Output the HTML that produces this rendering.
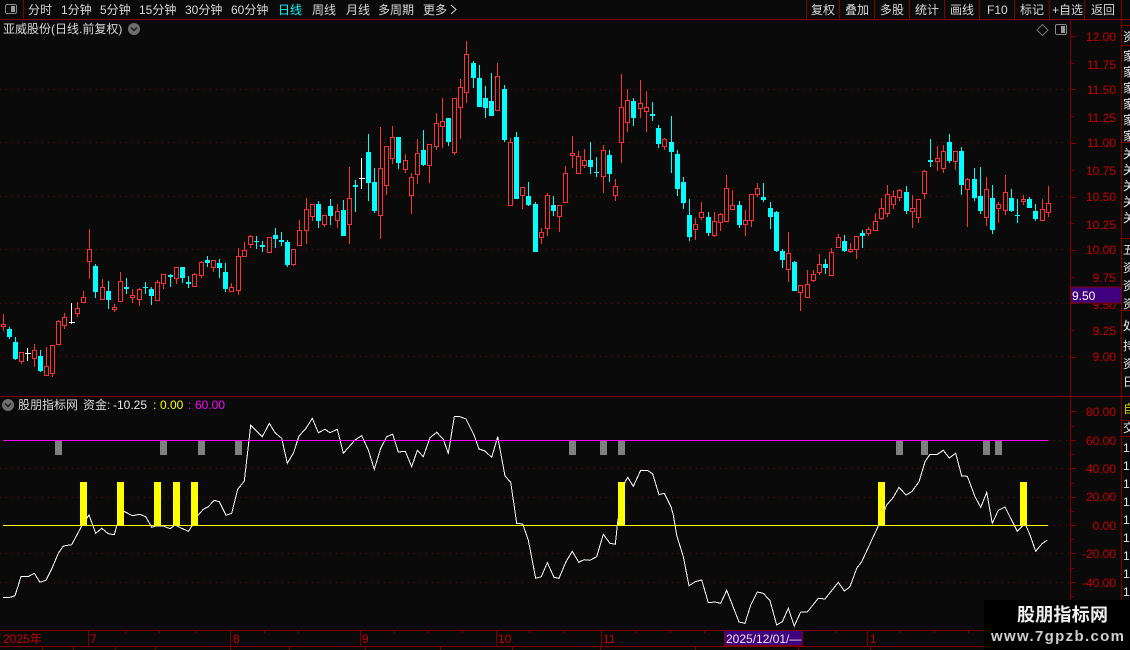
<!DOCTYPE html>
<html lang="zh">
<head>
<meta charset="utf-8">
<title>股朋指标网</title>
<style>
html,body{margin:0;padding:0;background:#0a0a0a;width:1130px;height:650px;overflow:hidden}
svg{display:block}
text{font-family:"Liberation Sans","WenQuanYi Zen Hei","Noto Sans CJK SC",sans-serif;font-size:12px;text-rendering:optimizeSpeed}
.t{fill:#d8d8d8}
.a{fill:#c80000}
.g{stroke:#7a0000;stroke-width:1;stroke-dasharray:1 5;fill:none}
.l{stroke:#800000;stroke-width:1;fill:none}
.s{fill:#e8e8e8;font-family:"WenQuanYi Zen Hei","Noto Sans CJK SC",sans-serif}
</style>
</head>
<body>
<svg width="1130" height="650" viewBox="0 0 1130 650" xmlns="http://www.w3.org/2000/svg" shape-rendering="crispEdges">
<rect width="1130" height="650" fill="#0a0a0a"/>

<!-- toolbar -->
<path class="l" d="M0 19.5H1130M23.5 0V19M806.5 0V19M839.5 0V19M874.5 0V19M909.5 0V19M944.5 0V19M979.5 0V19M1014.5 0V19M1049.5 0V19M1084.5 0V19M1121.5 0V19"/>
<rect x="5.500" y="4.500" width="11" height="9" rx="1.500" fill="none" stroke="#888" stroke-width="1"/>
<rect x="11" y="6" width="4" height="6" fill="#999"/>
<g class="t">
<text x="28" y="14" class="t">分时</text>
<text x="61" y="14" class="t">1分钟</text>
<text x="100" y="14" class="t">5分钟</text>
<text x="139" y="14" class="t">15分钟</text>
<text x="185" y="14" class="t">30分钟</text>
<text x="231" y="14" class="t">60分钟</text>
<text x="278" y="14" fill="#00ffff">日线</text>
<text x="312" y="14" class="t">周线</text>
<text x="346" y="14" class="t">月线</text>
<text x="378" y="14" class="t">多周期</text>
<text x="423" y="14" class="t">更多</text>
<text x="811" y="14" class="t">复权</text>
<text x="845" y="14" class="t">叠加</text>
<text x="880" y="14" class="t">多股</text>
<text x="915" y="14" class="t">统计</text>
<text x="950" y="14" class="t">画线</text>
<text x="987" y="14" class="t">F10</text>
<text x="1020" y="14" class="t">标记</text>
<text x="1052" y="14" class="t">+自选</text>
<text x="1091" y="14" class="t">返回</text>
</g>
<path d="M451 5L456 9.500L451 14" fill="none" stroke="#d8d8d8" stroke-width="1" shape-rendering="auto"/>

<!-- main header -->
<text x="3" y="33" class="t">亚威股份(日线.前复权)</text>
<circle cx="134" cy="29" r="6" fill="#6e6e6e" shape-rendering="auto"/>
<path d="M131 27.500L134 30.500L137 27.500" fill="none" stroke="#1a1a1a" stroke-width="1.500" shape-rendering="auto"/>
<path d="M1042.500 24.500L1048 30L1042.500 35.500L1037 30Z" fill="none" stroke="#777" stroke-width="1" shape-rendering="auto"/>
<rect x="1055.500" y="24.500" width="11" height="10" rx="1.500" fill="none" stroke="#888" stroke-width="1"/>
<rect x="1061" y="26" width="4" height="7" fill="#999"/>

<!-- grid top -->
<path class="g" d="M0 89.500H1071M0 142.500H1071M0 196.500H1071M0 249.500H1071M0 303.500H1071M0 356.500H1071"/>

<!-- red wicks -->
<path fill="none" stroke="#ff3232" stroke-width="1" d="M3.500 314V331M21.500 352V364M34.500 344V367M46.500 347V375M52.500 345V377M58.500 320V344M64.500 313V329M77.500 302V317M83.500 291V302M89.500 229V279M102.500 279V299M114.500 304V312M120.500 272V301M132.500 289V303M139.500 288V306M157.500 280V300M163.500 274V289M176.500 267V284M194.500 273V287M201.500 261V278M213.500 260V272M231.500 283V292M238.500 248V295M244.500 242V257M250.500 235V248M269.500 237V253M293.500 249V266M299.500 220V246M306.500 198V244M312.500 204V221M324.500 215V227M337.500 204V228M349.500 167V244M380.500 127V239M386.500 146V195M392.500 126V164M405.500 154V173M411.500 173V214M417.500 139V184M429.500 144V183M436.500 113V150M442.500 98V148M454.500 98V155M460.500 79V139M466.500 41V103M497.500 63V110M510.500 138V205M522.500 187V209M541.500 228V244M547.500 193V236M559.500 205V232M565.500 166V202M572.500 136V168M578.500 151V173M584.500 149V168M603.500 145V193M615.500 179V201M621.500 74V163M627.500 89V132M640.500 80V118M646.500 91V132M664.500 138V150M695.500 218V240M701.500 202V220M714.500 212V237M720.500 213V231M726.500 175V221M732.500 190V209M745.500 210V236M751.500 194V227M757.500 183V197M788.500 232V282M800.500 285V311M807.500 270V297M813.500 270V282M819.500 254V275M831.500 248V275M838.500 234V248M850.500 243V253M856.500 236V259M868.500 227V236M875.500 213V231M881.500 198V220M887.500 185V217M893.500 191V209M899.500 189V201M912.500 195V228M918.500 199V223M924.500 170V199M937.500 146V171M943.500 145V173M955.500 151V170M967.500 178V227M986.500 177V226M998.500 202V223M1005.500 175V215M1023.500 195V205M1042.500 199V220M1048.500 186V217"/>
<!-- red bodies -->
<path fill="#0a0a0a" stroke="#ff3232" stroke-width="1" d="M1.500 324.500h4V326.500h-4zM19.500 352.500h4V361.500h-4zM32.500 350.500h4V358.500h-4zM44.500 366.500h4V375.500h-4zM50.500 345.500h4V373.500h-4zM56.500 321.500h4V344.500h-4zM62.500 317.500h4V325.500h-4zM75.500 308.500h4V313.500h-4zM81.500 297.500h4V302.500h-4zM87.500 249.500h4V261.500h-4zM100.500 287.500h4V299.500h-4zM112.500 307.500h4V309.500h-4zM118.500 281.500h4V301.500h-4zM130.500 295.500h4V297.500h-4zM137.500 289.500h4V299.500h-4zM155.500 282.500h4V300.500h-4zM161.500 274.500h4V283.500h-4zM174.500 267.500h4V278.500h-4zM192.500 274.500h4V286.500h-4zM199.500 262.500h4V275.500h-4zM211.500 260.500h4V267.500h-4zM229.500 287.500h4V291.500h-4zM236.500 256.500h4V290.500h-4zM242.500 250.500h4V256.500h-4zM248.500 236.500h4V244.500h-4zM267.500 237.500h4V252.500h-4zM291.500 249.500h4V264.500h-4zM297.500 230.500h4V245.500h-4zM304.500 209.500h4V230.500h-4zM310.500 204.500h4V216.500h-4zM322.500 215.500h4V224.500h-4zM335.500 211.500h4V220.500h-4zM347.500 198.500h4V224.500h-4zM378.500 168.500h4V215.500h-4zM384.500 146.500h4V185.500h-4zM390.500 137.500h4V158.500h-4zM403.500 160.500h4V169.500h-4zM409.500 177.500h4V195.500h-4zM415.500 153.500h4V174.500h-4zM427.500 144.500h4V165.500h-4zM434.500 123.500h4V146.500h-4zM440.500 121.500h4V126.500h-4zM452.500 98.500h4V152.500h-4zM458.500 87.500h4V107.500h-4zM464.500 54.500h4V92.500h-4zM495.500 76.500h4V110.500h-4zM508.500 142.500h4V205.500h-4zM520.500 187.500h4V195.500h-4zM539.500 232.500h4V237.500h-4zM545.500 195.500h4V228.500h-4zM557.500 205.500h4V216.500h-4zM563.500 173.500h4V202.500h-4zM570.500 153.500h4V155.500h-4zM576.500 156.500h4V173.500h-4zM582.500 160.500h4V165.500h-4zM601.500 150.500h4V176.500h-4zM613.500 186.500h4V195.500h-4zM619.500 107.500h4V142.500h-4zM625.500 100.500h4V122.500h-4zM638.500 103.500h4V108.500h-4zM644.500 107.500h4V111.500h-4zM662.500 139.500h4V146.500h-4zM693.500 224.500h4V229.500h-4zM699.500 212.500h4V217.500h-4zM712.500 221.500h4V235.500h-4zM718.500 214.500h4V222.500h-4zM724.500 188.500h4V221.500h-4zM730.500 205.500h4V209.500h-4zM743.500 220.500h4V224.500h-4zM749.500 194.500h4V220.500h-4zM755.500 188.500h4V194.500h-4zM786.500 253.500h4V269.500h-4zM798.500 285.500h4V292.500h-4zM805.500 284.500h4V297.500h-4zM811.500 274.500h4V280.500h-4zM817.500 264.500h4V272.500h-4zM829.500 252.500h4V275.500h-4zM836.500 237.500h4V247.500h-4zM848.500 249.500h4V251.500h-4zM854.500 236.500h4V249.500h-4zM866.500 229.500h4V233.500h-4zM873.500 221.500h4V230.500h-4zM879.500 208.500h4V218.500h-4zM885.500 194.500h4V213.500h-4zM891.500 196.500h4V204.500h-4zM897.500 190.500h4V197.500h-4zM910.500 208.500h4V211.500h-4zM916.500 199.500h4V217.500h-4zM922.500 171.500h4V193.500h-4zM935.500 158.500h4V161.500h-4zM941.500 151.500h4V168.500h-4zM953.500 151.500h4V161.500h-4zM965.500 179.500h4V189.500h-4zM984.500 189.500h4V217.500h-4zM996.500 204.500h4V208.500h-4zM1003.500 192.500h4V210.500h-4zM1021.500 199.500h4V201.500h-4zM1040.500 209.500h4V220.500h-4zM1046.500 203.500h4V212.500h-4z"/>

<!-- cyan wicks -->
<path fill="none" stroke="#00ffff" stroke-width="1" d="M9.500 327V339M15.500 337V360M40.500 350V372M95.500 264V298M108.500 281V309M126.500 278V294M145.500 282V294M151.500 287V305M170.500 274V287M182.500 267V283M188.500 276V288M207.500 256V267M219.500 259V278M225.500 263V292M256.500 236V249M262.500 241V252M275.500 228V248M281.500 232V246M287.500 240V267M318.500 201V228M330.500 199V225M343.500 200V236M355.500 180V212M368.500 134V201M374.500 168V213M398.500 137V169M423.500 130V166M448.500 118V146M473.500 61V88M479.500 65V107M485.500 86V118M491.500 73V116M504.500 85V142M516.500 132V199M528.500 182V206M535.500 202V252M553.500 196V216M590.500 142V174M596.500 157V177M609.500 150V182M633.500 98V126M652.500 102V121M658.500 125V148M671.500 116V173M677.500 150V196M683.500 177V209M689.500 199V241M708.500 212V236M739.500 201V228M763.500 183V202M770.500 202V229M776.500 211V252M782.500 249V268M794.500 261V291M825.500 259V274M844.500 235V252M862.500 230V248M906.500 186V214M930.500 139V167M949.500 134V163M961.500 147V195M974.500 168V201M980.500 167V214M992.500 185V234M1011.500 189V212M1017.500 199V223M1029.500 197V208M1035.500 204V221"/>
<!-- cyan bodies -->
<path fill="none" stroke="#00ffff" stroke-width="5" d="M9.500 329V337M15.500 342V359M40.500 356V371M95.500 266V292M108.500 291V300M126.500 287V289M145.500 287V288M151.500 289V296M170.500 275V277M182.500 267V278M188.500 282V284M207.500 260V263M219.500 263V268M225.500 272V289M256.500 241V242M262.500 245V247M275.500 235V239M281.500 240V242M287.500 242V265M318.500 204V221M330.500 206V216M343.500 210V236M355.500 185V187M368.500 152V183M374.500 182V211M398.500 137V163M423.500 150V165M448.500 118V142M473.500 63V78M479.500 78V107M485.500 98V108M491.500 101V116M504.500 89V140M516.500 137V199M528.500 196V205M535.500 204V252M553.500 205V211M590.500 160V167M596.500 172V173M609.500 155V174M633.500 101V118M652.500 114V116M658.500 128V144M671.500 142V152M677.500 154V189M683.500 182V203M689.500 215V237M708.500 217V233M739.500 205V225M763.500 197V200M770.500 208V217M776.500 212V251M782.500 251V260M794.500 262V291M825.500 264V268M844.500 241V251M862.500 233V236M906.500 192V211M930.500 160V162M949.500 142V161M961.500 151V185M974.500 179V198M980.500 196V211M992.500 198V230M1011.500 198V211M1017.500 215V216M1029.500 199V208M1035.500 211V219"/>
<!-- white dojis -->
<path fill="none" stroke="#ffffff" stroke-width="1" d="M27.500 348V361M25 353.500H31M71.500 303V324M69 322.500H75M361.500 158V189M359 178.500H365"/>

<!-- axis -->
<path class="l" d="M1070.500 19V630M1121.500 19V646M1071 36.500H1076M1071 63.500H1074M1071 89.500H1076M1071 116.500H1074M1071 143.500H1076M1071 170.500H1074M1071 197.500H1076M1071 223.500H1074M1071 250.500H1076M1071 277.500H1074M1071 303.500H1076M1071 330.500H1074M1071 357.500H1076"/>
<g class="a" text-anchor="end">
<text x="1116" y="41" class="a">12.00</text>
<text x="1116" y="69" class="a">11.75</text>
<text x="1116" y="94" class="a">11.50</text>
<text x="1116" y="122" class="a">11.25</text>
<text x="1116" y="147" class="a">11.00</text>
<text x="1116" y="175" class="a">10.75</text>
<text x="1116" y="201" class="a">10.50</text>
<text x="1116" y="229" class="a">10.25</text>
<text x="1116" y="254" class="a">10.00</text>
<text x="1116" y="282" class="a">9.75</text>
<text x="1116" y="309" class="a">9.50</text>
<text x="1116" y="335" class="a">9.25</text>
<text x="1116" y="361" class="a">9.00</text>
</g>
<rect x="1071" y="287" width="50.500" height="16" fill="#400080" stroke="#800000" stroke-width="1"/>
<text x="1072" y="300" fill="#ffffff">9.50</text>

<!-- right strip -->
<path class="l" d="M1122 25.500H1130M1122 45.500H1130M1122 142.500H1130M1122 238.500H1130M1122 310.500H1130M1122 396.500H1130M1122 420.500H1130M1122 436.500H1130"/>
<g class="s">
<text x="1123" y="41" class="s">资</text>
<text x="1123" y="60" class="s">家</text><text x="1123" y="76" class="s">家</text><text x="1123" y="92" class="s">家</text><text x="1123" y="108" class="s">家</text><text x="1123" y="124" class="s">家</text><text x="1123" y="140" class="s">家</text>
<text x="1123" y="158" class="s">关</text><text x="1123" y="174" class="s">关</text><text x="1123" y="190" class="s">关</text><text x="1123" y="206" class="s">关</text><text x="1123" y="222" class="s">关</text>
<text x="1123" y="254" class="s">五</text><text x="1123" y="272" class="s">资</text><text x="1123" y="290" class="s">资</text><text x="1123" y="308" class="s">资</text>
<text x="1123" y="330" class="s">处</text><text x="1123" y="350" class="s">持</text><text x="1123" y="368" class="s">资</text><text x="1123" y="386" class="s">日</text>
<text x="1123" y="432" class="s">交</text>
</g>
<text x="1123" y="413" fill="#d0d000" style="font-family:'WenQuanYi Zen Hei','Noto Sans CJK SC',sans-serif">自</text>
<g class="s">
<text x="1123" y="452" class="s" style="font-family:'Liberation Sans',sans-serif">1</text><text x="1123" y="470" class="s" style="font-family:'Liberation Sans',sans-serif">1</text><text x="1123" y="488" class="s" style="font-family:'Liberation Sans',sans-serif">1</text><text x="1123" y="506" class="s" style="font-family:'Liberation Sans',sans-serif">1</text><text x="1123" y="524" class="s" style="font-family:'Liberation Sans',sans-serif">1</text><text x="1123" y="542" class="s" style="font-family:'Liberation Sans',sans-serif">1</text><text x="1123" y="560" class="s" style="font-family:'Liberation Sans',sans-serif">1</text><text x="1123" y="578" class="s" style="font-family:'Liberation Sans',sans-serif">1</text><text x="1123" y="596" class="s" style="font-family:'Liberation Sans',sans-serif">1</text>
</g>

<!-- lower panel -->
<path class="l" d="M0 396.500H1121M0 630.500H1121M0 646.500H1130"/>
<circle cx="8" cy="405" r="6" fill="#6e6e6e" shape-rendering="auto"/>
<path d="M5 403.500L8 406.500L11 403.500" fill="none" stroke="#1a1a1a" stroke-width="1.500" shape-rendering="auto"/>
<text x="18" y="409" class="t">股朋指标网</text>
<text x="83" y="409" class="t">资金:</text>
<text x="113" y="409" fill="#e8e8e8">-10.25</text>
<text x="153" y="409" fill="#ffff00">:</text>
<text x="160" y="409" fill="#ffff00">0.00</text>
<text x="188" y="409" fill="#ff00ff">:</text>
<text x="195" y="409" fill="#ff00ff">60.00</text>

<path class="g" d="M0 468.500H1071M0 497.500H1071M0 553.500H1071M0 582.500H1071M1048 440.500H1071M1048 525.500H1071"/>

<polyline fill="none" stroke="#ffffff" stroke-width="1" points="3,597.300 10,597.300 15,595.700 21,576.700 28,576.700 34.300,573.300 40,582.300 46,580.300 52,568.300 58.300,553.300 63.300,546 71.700,544.700 81.700,526 89,515 95.700,533.300 101.700,528.300 108.300,533.700 114.300,534.700 117,525 124,511.300 132.300,515.700 140,514.300 145.700,516.700 151.700,527.300 156,526 163.300,526 170,528.700 175,525 181.700,528.300 188.300,531.300 192.700,525 198.300,515 203.300,509.300 208.300,506.700 214,500.300 219.300,501.700 226,515.300 231.700,513.300 237.700,489.300 244.300,481 250.700,425.300 262.300,436.700 269.300,423.300 275,432.700 281.700,438.300 287.300,463.300 293.300,453.300 299,436 306,428.300 312.300,418.300 318.300,432.700 325,429.300 330,432.700 337.300,429.300 343.300,453.300 355,440 361.700,435.700 368.300,450 374.300,469.300 380.700,448.300 386.700,436.700 392.700,434.300 398.300,452 405.300,451.300 411.700,466.700 417.300,450.300 423.300,456.700 430,437.700 436.700,432.300 443.300,439.300 448.300,453.300 454.300,416.700 460,416.700 466,419 474,435 479,449 485,451 491.700,457.300 497.700,436.700 505,476 510.700,482.300 516.700,523.300 522.700,524 528.300,540 535.700,578.300 541.300,576.700 547.300,562.700 554,577.300 559,578.300 566,561.700 572.300,551.300 578.700,562.300 584,559.700 590,560.300 596.700,556.700 603.300,534.300 610,543.300 615.300,544.300 617.700,521.700 625,482 627.700,477.300 633.300,486.300 640.700,470.300 647.300,470.300 652.700,474 659,494.700 664.300,493.300 671,506.700 673.300,515 676.700,535.300 683.300,556.700 689,585.700 695,581.700 701.700,580 708.300,602.700 715,602 720.700,603.300 726.700,590.300 739,622 745,623.300 750.700,605 757.300,592 763.300,593.300 770,600.700 776.700,625 782.300,621.700 788.300,608.300 794.300,626 800.700,612 807.300,612 818.300,598.300 825,599 838.300,582.300 844.300,591 850,586.700 856.700,568.300 861.700,561.700 878.300,526 886.700,505 893.300,497.300 899,487.300 906,495 911.700,491.700 919,481.700 925,461.700 930,454.300 937.300,454.300 943.300,450.300 949.300,458 955.700,453.300 961.700,476 967.300,476.300 975,496.700 980.700,507.300 986.700,492.300 992.300,523.300 998.300,510.300 1005,507 1017.300,531.300 1025,523.300 1030,535 1035.700,551.300 1041.700,544 1047.300,540"/>

<g fill="#ffff00">
<rect x="80" y="482" width="7" height="43"/><rect x="117" y="482" width="7" height="43"/><rect x="154" y="482" width="7" height="43"/><rect x="173" y="482" width="7" height="43"/><rect x="191" y="482" width="7" height="43"/><rect x="618" y="482" width="7" height="43"/><rect x="878" y="482" width="7" height="43"/><rect x="1020" y="482" width="7" height="43"/>
</g>
<g fill="#808080">
<rect x="55" y="441" width="7" height="14"/><rect x="160" y="441" width="7" height="14"/><rect x="198" y="441" width="7" height="14"/><rect x="235" y="441" width="7" height="14"/><rect x="569" y="441" width="7" height="14"/><rect x="600" y="441" width="7" height="14"/><rect x="618" y="441" width="7" height="14"/><rect x="896" y="441" width="7" height="14"/><rect x="921" y="441" width="7" height="14"/><rect x="983" y="441" width="7" height="14"/><rect x="995" y="441" width="7" height="14"/>
</g>
<path fill="none" stroke="#ffff00" stroke-width="1" d="M3 525.500H1048"/>
<path fill="none" stroke="#ff00ff" stroke-width="1" d="M3 440.500H1048"/>

<!-- lower axis -->
<path class="l" d="M1071 411.500H1076M1071 440.500H1076M1071 468.500H1076M1071 497.500H1076M1071 525.500H1076M1071 553.500H1076M1071 582.500H1076M1071 426.500H1074M1071 454.500H1074M1071 483.500H1074M1071 511.500H1074M1071 539.500H1074M1071 568.500H1074M1071 596.500H1074M1071 614.500H1074"/>
<text x="1116" y="416" class="a" text-anchor="end">80.00</text>
<text x="1116" y="445" class="a" text-anchor="end">60.00</text>
<text x="1116" y="473" class="a" text-anchor="end">40.00</text>
<text x="1116" y="501" class="a" text-anchor="end">20.00</text>
<text x="1116" y="530" class="a" text-anchor="end">0.00</text>
<text x="1116" y="558" class="a" text-anchor="end">-20.00</text>
<text x="1116" y="587" class="a" text-anchor="end">-40.00</text>

<!-- time axis -->
<path class="l" d="M88.500 630V646M230.500 630V646M360.500 630V646M496.500 630V646M601.500 630V646M867.500 630V646M125.500 630V633M159.500 630V633M195.500 630V633M264.500 630V633M298.500 630V633M394.500 630V633M428.500 630V633M462.500 630V633M529.500 630V633M563.500 630V633M636.500 630V633M670.500 630V633M704.500 630V633M772.500 630V633M836.500 630V633M900.500 630V633M934.500 630V633M968.500 630V633M42.500 646V650M73.500 646V650M115.500 646V650M155.500 646V650M230.500 646V650M289.500 646V650M365.500 646V650M440.500 646V650M512.500 646V650M600.500 646V650M695.500 646V650M798.500 646V650M870.500 646V650"/>
<text x="3" y="643" class="a">2025年</text>
<text x="90" y="643" class="a">7</text>
<text x="233" y="643" class="a">8</text>
<text x="362" y="643" class="a">9</text>
<text x="498" y="643" class="a">10</text>
<text x="603" y="643" class="a">11</text>
<text x="870" y="643" class="a">1</text>
<rect x="724.500" y="630.500" width="78" height="15" fill="#400080" stroke="#800000" stroke-width="1"/>
<text x="726" y="643" fill="#e8e8e8">2025/12/01/—</text>

<!-- watermark -->
<rect x="984" y="600" width="146" height="50" fill="#000"/>
<text x="1017" y="621" fill="#f0f0f0" font-weight="bold" style="font-size:18px;font-family:'Noto Sans CJK SC','WenQuanYi Zen Hei',sans-serif" textLength="91" lengthAdjust="spacing" shape-rendering="auto">股朋指标网</text>
<text x="991" y="641" fill="#cfcfcf" font-weight="bold" style="font-size:15px;font-family:'Liberation Sans',sans-serif" textLength="133" lengthAdjust="spacing">www.7gpzb.com</text>
</svg>
</body>
</html>
